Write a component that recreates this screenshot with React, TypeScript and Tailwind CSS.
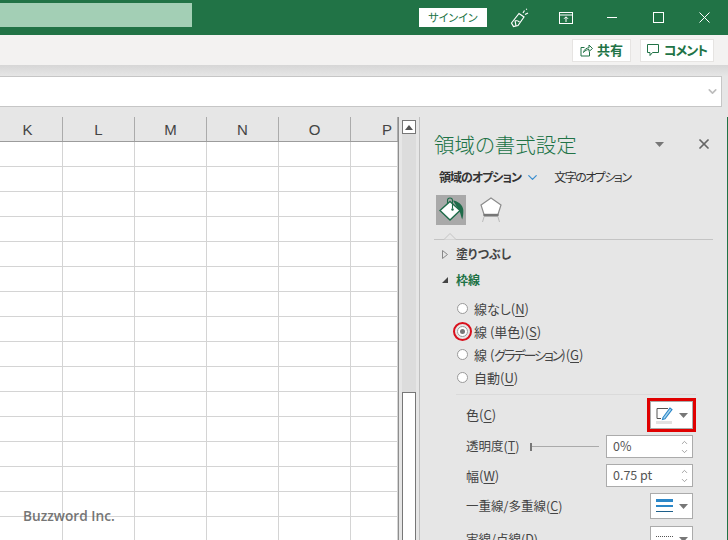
import React from 'react';
import { X, ChevronDown, ChevronUp } from 'lucide-react';

const columns = [
  { label: 'K', width: 'w-[63px]', pad: 'justify-center pr-[7px]' },
  { label: 'L', width: 'w-[72px]', pad: 'justify-center' },
  { label: 'M', width: 'w-[72px]', pad: 'justify-center' },
  { label: 'N', width: 'w-[72px]', pad: 'justify-center' },
  { label: 'O', width: 'w-[72px]', pad: 'justify-center' },
  { label: 'P', width: 'w-[47px]', pad: 'justify-end pr-[5px]' },
];

const rows = Array.from({ length: 16 }, (_, i) => i);

function Accel({ children }: { children: React.ReactNode }) {
  return <span className="underline underline-offset-2">{children}</span>;
}

function Radio({ checked, children }: { checked?: boolean; children: React.ReactNode }) {
  return (
    <div className="h-[23px] flex items-center pl-[37px] text-[13px] text-[#444]">
      <span className="relative w-[11px] h-[11px] rounded-full bg-white border border-[#9a9a9a] flex items-center justify-center mr-[6px]">
        {checked && <span className="w-[5px] h-[5px] rounded-full bg-[#777]" />}
        {checked && <span className="absolute -inset-[5px] rounded-full border-2 border-[#d9101c]" />}
      </span>
      <span>{children}</span>
    </div>
  );
}

function Spinner({ value }: { value: string }) {
  return (
    <div className="w-[87px] h-[23px] bg-white border border-[#ababab] flex items-center justify-between pl-[6px] pr-[3px] text-[12.5px] text-[#555]">
      <span>{value}</span>
      <div className="flex flex-col items-center text-[#888]">
        <ChevronUp size={9} strokeWidth={2} />
        <ChevronDown size={9} strokeWidth={2} />
      </div>
    </div>
  );
}

function Caret() {
  return (
    <svg width="9" height="5" viewBox="0 0 9 5">
      <path d="M0 0h9L4.5 5z" fill="#777" />
    </svg>
  );
}

function PaintIcon() {
  return (
    <svg width="26" height="26" viewBox="0 0 26 26">
      <path d="M15 3.5 C20 4 25 8 25.3 13 C25.5 17 25 20 24.2 22.5 C23 20 23 17 21 13.5 Z" fill="#1f6b4a" />
      <path d="M2 13.5 L12 4.5 L22 13.5 L12 23 Z" fill="#fff" stroke="#1f6b4a" strokeWidth="1.4" />
      <path d="M9.5 7 V3.5 a2.5 2.5 0 0 1 5 0 V11.5" fill="none" stroke="#1f6b4a" strokeWidth="1.1" />
      <circle cx="14.5" cy="12.5" r="1.2" fill="#1f6b4a" />
    </svg>
  );
}

function ShapeIcon() {
  return (
    <svg width="24" height="28" viewBox="0 0 24 28">
      <path d="M12 2 L22 9 L18.5 20 H5.5 L2 9 Z" fill="#fff" stroke="#8c8c8c" strokeWidth="1.2" />
      <path d="M4.5 19 H19.5" stroke="#777" strokeWidth="2.4" />
      <path d="M5 21 L3.5 26 M19 21 L20.5 26" stroke="#bbb" strokeWidth="1" />
    </svg>
  );
}

function PenIcon() {
  return (
    <svg width="20" height="20" viewBox="0 0 20 20" fill="none" stroke="#fff" strokeWidth="1.2">
      <path d="M1.5 15 L9 5.5 L14 9 L8 17.5 L3.5 18.5 Z" />
      <path d="M6 18 L5 12.5 M9.5 14 C8.5 13 7 12.5 5.5 12.5" />
      <path d="M13 5 L14.5 2.5 M15 6.5 L18 5 M16 1.5 L17 1" />
    </svg>
  );
}

function RibbonIcon() {
  return (
    <svg width="14" height="12" viewBox="0 0 14 12" fill="none" stroke="#fff" strokeWidth="1">
      <rect x="0.5" y="0.5" width="13" height="11" />
      <path d="M0.5 3 H13.5 M7 10 V5 M5 6.8 L7 4.8 L9 6.8" />
    </svg>
  );
}

function ShareIcon() {
  return (
    <svg width="13" height="13" viewBox="0 0 13 13" fill="none" stroke="#217346" strokeWidth="1">
      <path d="M4.5 3.5 H1 V12 H9.5 V8" />
      <path d="M3.5 8.5 C4 5.5 6.5 3.8 9 3.8 V1 L12.5 4.5 L9 7.5 V5.5 C7 5.5 5 6.5 3.5 8.5 Z" />
    </svg>
  );
}

function CommentIcon() {
  return (
    <svg width="13" height="13" viewBox="0 0 13 13" fill="none" stroke="#217346" strokeWidth="1">
      <path d="M0.5 0.5 H11.5 V8.5 H5.5 L3 11.5 V8.5 H0.5 Z" />
    </svg>
  );
}

function ColorPenIcon() {
  return (
    <svg width="17" height="18" viewBox="0 0 17 18">
      <path d="M12 2.5 H1 V12.5 H5" fill="none" stroke="#555" strokeWidth="1" />
      <path d="M7 11.5 L14 2 L16 3.5 L9 12.8 L6.5 13.5 Z" fill="#a8d4ee" stroke="#2b87c8" strokeWidth="1.1" />
      <rect x="0" y="15" width="16" height="3" fill="#e2e2e2" />
    </svg>
  );
}

function LinesIcon() {
  return (
    <svg width="17" height="14" viewBox="0 0 17 14">
      <rect x="0" y="0" width="17" height="3" fill="#2b87c8" />
      <rect x="0" y="6" width="17" height="2" fill="#2b87c8" />
      <rect x="0" y="12" width="17" height="1" fill="#1d5f8a" />
    </svg>
  );
}

export default function App() {
  return (
    <div className="w-[728px] h-[540px] overflow-hidden relative flex flex-col bg-[#e6e6e6] [font-family:'Noto_Sans_CJK_JP','Noto_Sans',sans-serif] [font-feature-settings:'palt']">
      {/* title bar */}
      <div className="h-[35px] shrink-0 bg-[#217346] flex items-center">
        <div className="w-[192px] h-[24px] -mt-[5px] bg-[#a3cfb5]" />
        <div className="ml-auto w-[68px] h-[19px] -mt-[1px] bg-white text-[#217346] text-[11px] flex items-center justify-center">
          サインイン
        </div>
        <div className="w-[46px] ml-[10px] flex justify-center"><PenIcon /></div>
        <div className="w-[46px] flex justify-center"><RibbonIcon /></div>
        <div className="w-[46px] flex justify-center"><div className="w-[10px] h-[1px] bg-white" /></div>
        <div className="w-[46px] flex justify-center"><div className="w-[11px] h-[11px] border border-white" /></div>
        <div className="w-[46px] mr-[1px] flex justify-center">
          <svg width="11" height="11" viewBox="0 0 11 11" stroke="#fff" strokeWidth="1"><path d="M.5.5l10 10M10.5.5l-10 10" /></svg>
        </div>
      </div>

      {/* ribbon */}
      <div className="h-[30px] shrink-0 bg-[#f3f2f1] flex items-center justify-end pr-[14px] gap-[9px]">
        <div className="w-[59px] h-[23px] bg-white border border-[#e6e4e2] flex items-center justify-center gap-[4px] text-[13px] font-bold text-[#217346]">
          <ShareIcon />
          共有
        </div>
        <div className="w-[74px] h-[23px] bg-white border border-[#e6e4e2] flex items-center justify-center gap-[4px] text-[13px] tracking-[-1px] font-bold text-[#217346]">
          <CommentIcon />
          コメント
        </div>
      </div>
      <div className="h-[11px] shrink-0 bg-gradient-to-b from-[#d6d6d6] to-[#e6e6e6]" />

      {/* formula bar */}
      <div className="h-[31px] shrink-0 mr-[6px] bg-white border-y border-r border-[#c6c6c6] flex items-center justify-end pr-[2px] text-[#bdbdbd]">
        <ChevronDown size={13} strokeWidth={3} />
      </div>
      <div className="h-[10px] shrink-0" />

      {/* sheet + pane */}
      <div className="flex-1 flex min-h-0">
        <div className="w-[399px] shrink-0 border-r border-[#8e8e8e]">
          <div className="h-[25px] flex border-b border-[#9c9c9c] bg-[#e6e6e6]">
            {columns.map((c) => (
              <div key={c.label} className={`${c.width} ${c.pad} flex items-center border-r border-[#ababab] text-[15px] leading-none text-[#444] [font-family:'Liberation_Sans',sans-serif]`}>
                {c.label}
              </div>
            ))}
          </div>
          {rows.map((r) => (
            <div key={r} className="h-[25px] flex bg-white border-b border-[#d4d4d4]">
              {columns.map((c) => (
                <div key={c.label} className={`${c.width} border-r border-[#d4d4d4]`} />
              ))}
            </div>
          ))}
        </div>

        {/* scrollbar */}
        <div className="w-[21px] shrink-0 border-r border-[#bfbfbf] pl-[3px] pr-[3px] flex flex-col">
          <div className="h-[14px] mt-[3px] bg-white border border-[#777] flex items-center justify-center">
            <svg width="8" height="5" viewBox="0 0 8 5"><path d="M4 0l4 5H0z" fill="#555" /></svg>
          </div>
          <div className="h-[258px] bg-[#dcdcdc]" />
          <div className="flex-1 bg-white border border-[#777] border-b-0" />
        </div>

        {/* format pane */}
        <div className="flex-1 min-w-0 border-r border-[#217346] flex flex-col [&>*]:shrink-0">
          <div className="h-[28px] mt-[13px] pl-[14px] pr-[15px] flex items-center text-[20.5px] text-[#217346] font-light">
            領域の書式設定
            <span className="ml-auto mr-[32px] flex"><Caret /></span>
            <X size={16} strokeWidth={2.6} className="text-[#666]" />
          </div>
          <div className="h-[20px] mt-[9px] pl-[19px] flex items-center text-[12px] text-[#333]">
            <span className="font-bold tracking-[-1px]">領域のオプション</span>
            <ChevronDown size={15} strokeWidth={2} className="ml-[4px] text-[#3b8fd0]" />
            <span className="ml-[14px] tracking-[-1.5px]">文字のオプション</span>
          </div>
          <div className="h-[30px] mt-[8px] pl-[16px] flex">
            <div className="w-[30px] h-[30px] bg-[#a9a9a9] flex items-center justify-center"><PaintIcon /></div>
            <div className="w-[24px] ml-[13px] flex items-center justify-center"><ShapeIcon /></div>
          </div>
          <div className="relative h-[1px] mt-[14px] ml-[14px] mr-[14px] bg-[#c4c4c4]">
            <svg className="absolute left-[9px] -top-[6px]" width="14" height="7" viewBox="0 0 14 7">
              <path d="M0 6.5 H1 L7 .5 L13 6.5 H14" fill="#e6e6e6" stroke="#c4c4c4" />
            </svg>
          </div>
          <div className="h-[20px] mt-[4px] pl-[22px] flex items-center text-[12px] font-bold text-[#444]">
            <svg width="6" height="9" viewBox="0 0 6 9" className="mr-[8px]"><path d="M.5.5 5.5 4.5.5 8.5z" fill="none" stroke="#888" /></svg>
            塗りつぶし
          </div>
          <div className="h-[20px] mt-[6px] pl-[22px] flex items-center text-[12px] font-bold text-[#217346]">
            <svg width="6" height="6" viewBox="0 0 6 6" className="mr-[8px]"><path d="M6 0v6H0z" fill="#444" /></svg>
            枠線
          </div>
          <div className="mt-[7px]">
            <Radio>線なし(<Accel>N</Accel>)</Radio>
            <Radio checked>線 (単色)(<Accel>S</Accel>)</Radio>
            <Radio>線 (<span className="tracking-[-2px]">グラデーション</span>)(<Accel>G</Accel>)</Radio>
            <Radio>自動(<Accel>U</Accel>)</Radio>
          </div>
          <div className="h-[1px] mt-[5px] ml-[36px] mr-[31px] bg-[#dadada]" />

          <div className="h-[28px] mt-[6px] pl-[46px] pr-[34px] flex items-center justify-between text-[13px] text-[#444]">
            <span>色(<Accel>C</Accel>)</span>
            <div className="relative w-[43px] h-[28px] bg-white border border-[#ababab] flex items-center justify-center gap-[6px]">
              <ColorPenIcon />
              <Caret />
              <span className="absolute -inset-[4px] border-[3px] border-[#e00000]" />
            </div>
          </div>
          <div className="h-[23px] mt-[6px] pl-[46px] pr-[34px] flex items-center text-[12.5px] text-[#444]">
            <span className="w-[64px]">透明度(<Accel>T</Accel>)</span>
            <div className="w-[2px] h-[8px] bg-[#777]" />
            <div className="w-[67px] h-[1px] bg-[#aaa] mr-[7px]" />
            <Spinner value="0%" />
          </div>
          <div className="h-[23px] mt-[6px] pl-[46px] pr-[34px] flex items-center justify-between text-[13px] text-[#444]">
            <span>幅(<Accel>W</Accel>)</span>
            <Spinner value="0.75 pt" />
          </div>
          <div className="h-[26px] mt-[6px] pl-[46px] pr-[34px] flex items-center justify-between text-[12.5px] text-[#444]">
            <span>一重線/多重線(<Accel>C</Accel>)</span>
            <div className="w-[43px] h-[26px] bg-white border border-[#ababab] flex items-center justify-center gap-[6px]">
              <LinesIcon />
              <Caret />
            </div>
          </div>
          <div className="h-[26px] mt-[7px] pl-[46px] pr-[34px] flex items-center justify-between text-[12.5px] text-[#444]">
            <span>実線/点線(<Accel>D</Accel>)</span>
            <div className="w-[43px] h-[26px] bg-white border border-[#ababab] flex items-center justify-center gap-[6px]">
              <div className="w-[17px] h-[6px] border-t border-b border-dotted border-[#555]" />
              <Caret />
            </div>
          </div>
        </div>
      </div>

      {/* watermark */}
      <div className="absolute left-[23px] top-[507px] text-[13.7px] leading-[18px] font-semibold text-[#555] opacity-80 [font-family:'Open_Sans',sans-serif]">
        Buzzword Inc.
      </div>
    </div>
  );
}
